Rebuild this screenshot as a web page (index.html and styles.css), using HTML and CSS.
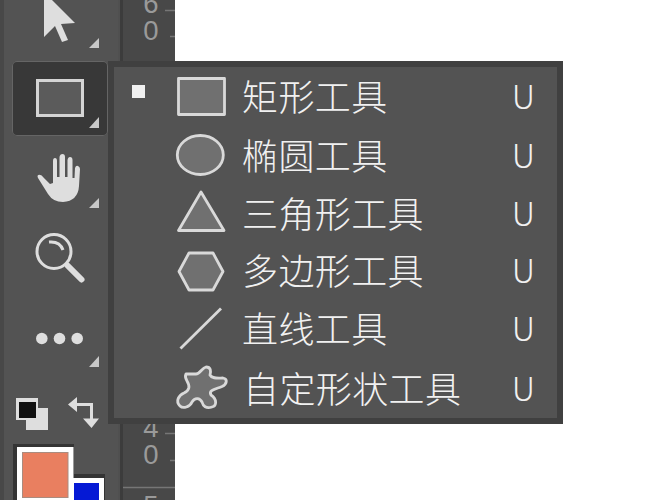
FILE: index.html
```html
<!DOCTYPE html>
<html lang="zh-CN">
<head>
<meta charset="utf-8">
<title>形状工具</title>
<link rel="stylesheet" href="styles.css">
</head>
<body>
<div class="app">
  <aside class="toolbar">
    <div class="tool tool-select">
      <svg width="96" height="61" viewBox="12 0 96 61"><path class="solid" d="M44 -8V37L55 26L62 42L68 40L61 24L75 23Z"/><path class="corner" d="M99 38V48H89Z"/></svg>
    </div>
    <div class="tool tool-shape active">
      <svg width="96" height="75" viewBox="12 61 96 75"><rect class="box" x="37.5" y="80.5" width="45" height="35"/><path class="corner" d="M99 117V128H89Z"/></svg>
    </div>
    <div class="tool tool-hand">
      <svg width="96" height="80" viewBox="12 136 96 80"><path class="solid" d="M38 178C36 174 41 174 43 177L50 184L53 183V161Q53 158 55 158Q57 158 57 161V177H59.500V157Q60 154 62.500 154Q65 154 65 157V177H67.500V160Q68 157 70 157Q72.500 157 72.500 160V178H74.500L75 168Q76 165 78 166Q80 167 80 169L79 186Q78 201 63 202Q53 202 48 194Z"/><path class="corner" d="M99 198V208H89Z"/></svg>
    </div>
    <div class="tool tool-zoom">
      <svg width="96" height="84" viewBox="12 216 96 84"><circle class="lens" cx="54" cy="251.500" r="17"/><path class="glint" d="M49 242Q60 241 63 250"/><path class="handle" d="M68 266L81.500 279.500"/></svg>
    </div>
    <div class="tool tool-more">
      <svg width="96" height="84" viewBox="12 300 96 84"><g class="solid"><circle cx="41.800" cy="338.500" r="5.800"/><circle cx="59.500" cy="338.500" r="5.800"/><circle cx="77.200" cy="338.500" r="5.800"/></g><path class="corner" d="M99 356V367H89Z"/></svg>
    </div>
    <div class="color-actions">
      <svg width="96" height="54" viewBox="12 384 96 54"><rect class="solid" x="26" y="408" width="22" height="22"/><rect class="solid" x="16" y="398" width="22" height="22"/><rect class="ink" x="19" y="402" width="17" height="16"/><path class="swap" d="M76 404.500H91.500V420"/><path class="solid" d="M68 404.500L77 397V412ZM83 418.500H99L91.500 428Z"/></svg>
    </div>
    <div class="swatches">
      <svg width="96" height="62" viewBox="12 438 96 62"><path class="swatch-edge" d="M13 444H74V474H105V500H13Z"/><rect class="paper" x="70" y="478" width="34" height="22"/><rect class="back" x="74" y="483" width="25" height="17"/><rect class="paper" x="17" y="447" width="56.500" height="53"/><rect class="front" x="22.500" y="452.500" width="45.500" height="45"/></svg>
    </div>
  </aside>
  <div class="ruler">
    <svg width="57" height="500" viewBox="118 0 57 500">
      <path class="ruler-line" d="M121.500 0V500"/>
      <path class="tick" d="M165 10.500H175M170 36.500H175M165 433.500H175M170 460.500H175M123 487.500H175"/>
      <g class="digits"><text x="151" y="12.500">6</text><text x="151" y="40">0</text><text x="151" y="437">4</text><text x="151" y="463.500">0</text><text x="151" y="515">5</text></g>
    </svg>
  </div>
  <main class="canvas"></main>
  <ul class="menu">
    <li class="item"><span class="mark selected"></span><svg class="icon" viewBox="-26 -29 52 58"><rect x="-22.500" y="-18.500" width="46" height="36"/></svg><span class="name">矩形工具</span><span class="key">U</span></li>
    <li class="item"><span class="mark"></span><svg class="icon" viewBox="-26 -29 52 58"><ellipse cx="-.7" cy="0" rx="23" ry="19.500"/></svg><span class="name">椭圆工具</span><span class="key">U</span></li>
    <li class="item"><span class="mark"></span><svg class="icon" viewBox="-26 -29 52 58"><path d="M0 -21L23 17.500H-22.500Z"/></svg><span class="name">三角形工具</span><span class="key">U</span></li>
    <li class="item"><span class="mark"></span><svg class="icon" viewBox="-26 -29 52 58"><path d="M-12 -18H12L22 .5L12 19H-12L-22 .5Z"/></svg><span class="name">多边形工具</span><span class="key">U</span></li>
    <li class="item"><span class="mark"></span><svg class="icon" viewBox="-26 -29 52 58"><path d="M-20.500 20.500L20 -19.500"/></svg><span class="name">直线工具</span><span class="key">U</span></li>
    <li class="item last"><span class="mark"></span><svg class="icon" viewBox="-26 -29 52 58"><path d="M-15 -14H-5C-1 -14 1 -20 5 -21C10 -21 10 -17 9 -13C11 -9 17 -10 22 -10C27 -9 26 -4 21 -1.500C15 1 7 2 10 7C16 11 16 18 11 19C5 21 2 18 1 14C-1 10 -6 9 -9 14C-11 19 -18 21 -21 18C-26 13 -22 7 -17 5C-11 2 -11 -2 -14 -7C-16 -10 -16 -12 -15 -14Z"/></svg><span class="name">自定形状工具</span><span class="key">U</span></li>
  </ul>
</div>
</body>
</html>
```

FILE: styles.css
```css
body {
  margin: 0;
  overflow: hidden;
}

.app {
  position: relative;
  display: flex;
  width: 662px;
  height: 500px;
  background: #fff;
}

svg {
  display: block;
}

.toolbar {
  box-sizing: border-box;
  display: flex;
  flex-direction: column;
  width: 118px;
  padding-left: 8px;
  border-left: 4px solid #484848;
  background: #535353;
}

.tool {
  width: 96px;
}

.active {
  border-radius: 5px;
  background: #383838;
  box-shadow: inset 0 0 0 1px #656565;
}

.solid {
  fill: #dedede;
}

.corner {
  fill: #c8c8c8;
}

.box {
  fill: #5b5b5b;
  stroke: #d4d4d4;
  stroke-width: 3;
}

.lens {
  fill: none;
  stroke: #dedede;
  stroke-width: 3;
}

.glint {
  fill: none;
  stroke: #dedede;
  stroke-width: 3;
}

.handle {
  stroke: #dedede;
  stroke-width: 6;
  stroke-linecap: round;
}

.ink {
  fill: #111;
}

.swap {
  fill: none;
  stroke: #dedede;
  stroke-width: 3;
}

.swatch-edge {
  fill: #343434;
}

.paper {
  fill: #fff;
}

.front {
  fill: #e97f60;
  stroke: #a98c80;
}

.back {
  fill: #0519d5;
}

.ruler {
  width: 57px;
  background: linear-gradient(90deg, #505050 3px, #484848 3px);
}

.ruler-line {
  stroke: #3c3c3c;
  stroke-width: 3;
}

.tick {
  stroke: #767676;
  stroke-width: 1.5;
}

.digits {
  fill: #9a9a9a;
  font: 27.5px "Liberation Sans", Arial, sans-serif;
  text-anchor: middle;
}

.canvas {
  flex: 1;
}

.menu {
  position: absolute;
  left: 108px;
  top: 61px;
  box-sizing: border-box;
  display: grid;
  grid-template-rows: 59px 58px 58px 57px 58px 61px;
  width: 455px;
  height: 363px;
  margin: 0;
  padding: 0;
  list-style: none;
  border: 6px solid #404040;
  background: #535353;
  color: #f1f1f1;
  font-family: "Noto Sans CJK SC", sans-serif;
  font-weight: 300;
}

.item {
  display: flex;
  align-items: center;
  padding: 0 22px 0 18px;
}

.mark {
  width: 13px;
  height: 13px;
  margin-bottom: 11px;
}

.selected {
  background: #f0f0f0;
}

.icon {
  width: 52px;
  height: 58px;
  margin-left: 30px;
  overflow: visible;
  fill: #707070;
  stroke: #d9d9d9;
  stroke-width: 2.8;
  stroke-linejoin: round;
}

.name {
  margin-left: 15px;
  font-size: 36px;
  letter-spacing: 0.4px;
  line-height: 50px;
  padding-bottom: 3px;
}

.last .name {
  margin-left: 16px;
  padding-bottom: 2px;
}

.key {
  margin-left: auto;
  font-size: 33px;
  line-height: 50px;
  padding-bottom: 3px;
}

.last .key {
  padding-bottom: 1px;
}
```
